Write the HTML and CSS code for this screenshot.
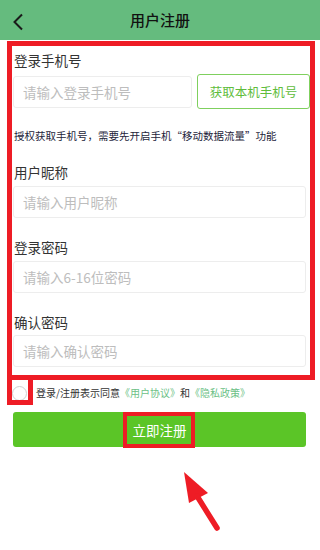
FILE: index.html
```html
<!DOCTYPE html>
<html lang="zh-CN">
<head>
<meta charset="utf-8">
<title>用户注册</title>
<link rel="stylesheet" href="styles.css">
</head>
<body>
<div class="page">
  <header class="bar">
    <span class="back"><svg width="12" height="18" viewBox="0 0 12 18"><path d="M10 1.5 L2.5 9 L10 16.5" fill="none" stroke="#1a1a1a" stroke-width="2"/></svg></span>
    <h1 class="title">用户注册</h1>
  </header>

  <main class="form">
    <div class="label">登录手机号</div>
    <div class="row">
      <input class="input grow" type="text" placeholder="请输入登录手机号">
      <button class="get">获取本机手机号</button>
    </div>
    <p class="hint">授权获取手机号，需要先开启手机“移动数据流量”功能</p>

    <div class="label gap">用户昵称</div>
    <input class="input" type="text" placeholder="请输入用户昵称">

    <div class="label gap">登录密码</div>
    <input class="input" type="password" placeholder="请输入6-16位密码">

    <div class="label gap">确认密码</div>
    <input class="input last" type="password" placeholder="请输入确认密码">
  </main>

  <div class="agree">
    <span class="check"></span>
    <span class="agree-text">登录/注册表示同意<a class="link">《用户协议》</a>和<a class="link">《隐私政策》</a></span>
  </div>

  <button class="submit">立即注册</button>

  <div class="mark mark-form"></div>
  <div class="mark mark-check"></div>
  <div class="mark mark-submit"></div>
  <svg class="arrow" width="50" height="70" viewBox="0 0 50 70">
    <polygon points="3,2 8,33 27,23" fill="#ee1c25"/>
    <line x1="16" y1="26" x2="36" y2="58" stroke="#ee1c25" stroke-width="5.5" stroke-linecap="round"/>
  </svg>
</div>
</body>
</html>
```

FILE: styles.css
```css
* { box-sizing: border-box; }
html, body { margin: 0; padding: 0; background: #fff; }
body {
  font-family: "Noto Sans CJK SC", "Noto Sans", "Liberation Sans", sans-serif;
  color: #333;
}
.page { position: relative; width: 320px; height: 550px; overflow: hidden; }

.bar {
  height: 40px;
  background: #65bb7e;
  display: flex;
  align-items: center;
  justify-content: center;
  position: relative;
}
.back { position: absolute; left: 12px; top: 13px; display: flex; }
.title { margin: 0; font-size: 15px; font-weight: 500; color: #111; line-height: 20px; }

.form { padding: 10px 14px 0 13px; display: flex; flex-direction: column; }
.label { font-size: 13.5px; line-height: 20px; color: #333; padding-left: 1px; }
.label.gap { margin-top: 18px; }
.label.gap ~ .label.gap { margin-top: 19px; }

.row { display: flex; align-items: center; gap: 5px; margin-top: 4px; height: 35px; margin-right: -4px; }
.input {
  height: 32px;
  margin-top: 4px;
  border: 1px solid #ededed;
  border-radius: 3px;
  padding: 0 9px;
  font-family: inherit;
  font-size: 13.5px;
  color: #333;
  outline: none;
  width: 100%;
  background: #fff;
}
.input.last { margin-top: 3px; }
.row .input { margin-top: 0; width: auto; }
.grow { flex: 1; min-width: 0; }
.input::placeholder { color: #bdbdbd; }
.get {
  width: 113px;
  height: 35px;
  border: 1.5px solid #7fd05e;
  border-radius: 3px;
  background: #fff;
  color: #5fbd3c;
  font-family: inherit;
  font-size: 12.5px;
  padding: 0;
}
.hint { margin: 19px 0 0 1px; font-size: 10.5px; line-height: 16px; color: #1d1d3a; }

.agree { display: flex; align-items: center; gap: 9px; margin: 16px 0 0 12px; height: 20px; }
.check { width: 15px; height: 15px; border: 1px solid #cfcfcf; border-radius: 50%; flex: none; }
.agree-text { font-size: 10px; color: #333; line-height: 20px; }
.link { color: #6cbf86; text-decoration: none; }

.submit {
  display: block;
  margin: 9px 14px 0 13px;
  width: 293px;
  height: 35px;
  border: none;
  border-radius: 3px;
  background: #5bc527;
  color: #fff;
  font-family: inherit;
  font-size: 13.5px;
}

.mark { position: absolute; border: 5px solid #ee1c25; pointer-events: none; }
.mark-form { left: 7px; top: 41px; width: 308px; height: 339px; }
.mark-check { left: 7px; top: 375px; width: 26px; height: 30px; border-width: 5px; }
.mark-submit { left: 123px; top: 412px; width: 72px; height: 36px; border-width: 4px; }
.arrow { position: absolute; left: 181px; top: 470px; }
```
